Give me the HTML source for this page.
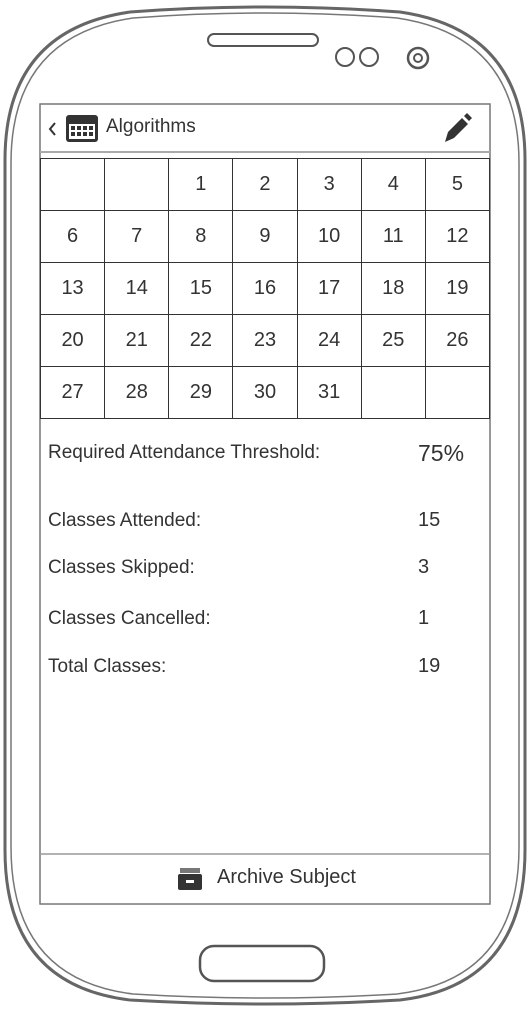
<!DOCTYPE html><html><head><style>
body{margin:0;width:530px;height:1010px;background:#fff;position:relative;overflow:hidden;font-family:"Liberation Sans",sans-serif;color:#333}
.a{position:absolute}
td{border:1px solid #333;width:64px;height:51px;text-align:center;font-size:20px;color:#333;padding:0}
table{border-collapse:collapse;position:absolute;left:40px;top:158px;width:450px}
.l{position:absolute;left:48px;font-size:19px}
.v{position:absolute;left:418px;font-size:20px}
</style></head><body>
<svg class="a" style="left:0;top:0" width="530" height="1010">
<path d="M5 160 Q5 30 130 12 Q265 2 400 12 Q525 30 525 160 L525 850 Q525 985 400 1000 Q265 1008 130 1000 Q5 985 5 850Z" fill="none" stroke="#666" stroke-width="3"/>
<path d="M11 163 Q11 36 133 18 Q265 8 397 18 Q519 36 519 163 L519 847 Q519 979 397 994 Q265 1002 133 994 Q11 979 11 847Z" fill="none" stroke="#777" stroke-width="1.5"/>
<rect x="208" y="34" width="110" height="12" rx="6" fill="none" stroke="#555" stroke-width="2"/>
<circle cx="345" cy="57" r="9" fill="none" stroke="#555" stroke-width="2"/>
<circle cx="369" cy="57" r="9" fill="none" stroke="#555" stroke-width="2"/>
<circle cx="418" cy="58" r="10" fill="none" stroke="#555" stroke-width="2.5"/>
<circle cx="418" cy="58" r="4" fill="none" stroke="#555" stroke-width="2"/>
<rect x="200" y="946" width="124" height="35" rx="14" fill="none" stroke="#555" stroke-width="2.5"/>
<rect x="40" y="104" width="450" height="800" fill="none" stroke="#777" stroke-width="1.5"/>
<line x1="40" y1="152" x2="490" y2="152" stroke="#aaa" stroke-width="2"/>
<line x1="40" y1="854" x2="490" y2="854" stroke="#999" stroke-width="1.5"/>
<path d="M55 123 L50 129 L55 135" fill="none" stroke="#333" stroke-width="2"/>
<rect x="66" y="115" width="32" height="27" rx="3" fill="#333"/>
<rect x="69" y="124" width="26" height="15" fill="#fff"/>
<g fill="#333"><rect x="71" y="126" width="4" height="4"/><rect x="77" y="126" width="4" height="4"/><rect x="83" y="126" width="4" height="4"/><rect x="89" y="126" width="4" height="4"/><rect x="71" y="132" width="4" height="4"/><rect x="77" y="132" width="4" height="4"/><rect x="83" y="132" width="4" height="4"/><rect x="89" y="132" width="4" height="4"/></g>
<path d="M445 142 L448 132 L462 118 L468 124 L454 138Z M464 116 L467 113 L472 118 L469 121Z" fill="#333"/>
<rect x="178" y="874" width="24" height="16" rx="2" fill="#333"/>
<rect x="180" y="868" width="20" height="5" fill="#777"/>
<rect x="186" y="880" width="8" height="3" fill="#fff"/>
</svg>
<div class="a" style="left:106px;top:116px;font-size:19px">Algorithms</div>
<table>
<tr><td></td><td></td><td>1</td><td>2</td><td>3</td><td>4</td><td>5</td></tr>
<tr><td>6</td><td>7</td><td>8</td><td>9</td><td>10</td><td>11</td><td>12</td></tr>
<tr><td>13</td><td>14</td><td>15</td><td>16</td><td>17</td><td>18</td><td>19</td></tr>
<tr><td>20</td><td>21</td><td>22</td><td>23</td><td>24</td><td>25</td><td>26</td></tr>
<tr><td>27</td><td>28</td><td>29</td><td>30</td><td>31</td><td></td><td></td></tr>
</table>
<div class="l" style="top:442px">Required Attendance Threshold:</div><div class="v" style="top:440px;font-size:23px">75%</div>
<div class="l" style="top:510px">Classes Attended:</div><div class="v" style="top:509px">15</div>
<div class="l" style="top:557px">Classes Skipped:</div><div class="v" style="top:556px">3</div>
<div class="l" style="top:608px">Classes Cancelled:</div><div class="v" style="top:607px">1</div>
<div class="l" style="top:656px">Total Classes:</div><div class="v" style="top:655px">19</div>
<div class="a" style="left:217px;top:866px;font-size:20px">Archive Subject</div>
</body></html>
